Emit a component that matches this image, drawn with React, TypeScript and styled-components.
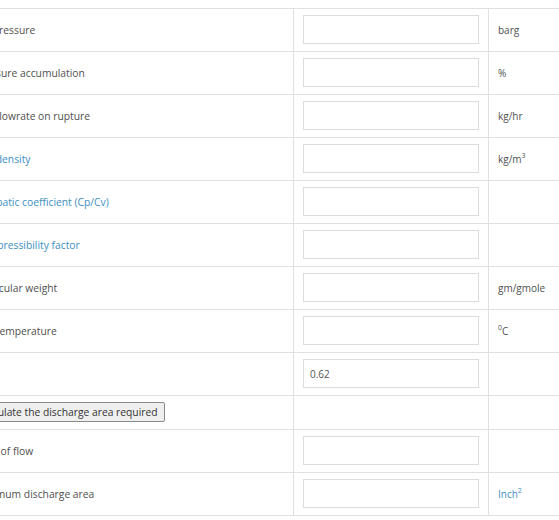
import React from "react";
import styled, { createGlobalStyle } from "styled-components";

const Global = createGlobalStyle`
  html {
    overflow: hidden;
  }
  body {
    margin: 0;
    background: #ffffff;
    font-family: "Open Sans", "Noto Sans", Arial, sans-serif;
    font-size: 10px;
    color: #505050;
  }
`;

const Page = styled.div`
  padding-top: 8px;
`;

const Table = styled.div`
  margin-left: -34px;
  width: calc(100% + 34px);
  border-top: 1px solid #e0e0e0;
`;

const Row = styled.div<{ $h?: number }>`
  display: grid;
  grid-template-columns: 328px 195px 1fr;
  height: ${(p) => p.$h ?? 43}px;
  box-sizing: border-box;
  border-bottom: 1px solid #e0e0e0;
`;

const Cell = styled.div<{ $last?: boolean }>`
  box-sizing: border-box;
  display: flex;
  align-items: center;
  padding: 0 9px;
  border-right: ${(p) => (p.$last ? "none" : "1px solid #e0e0e0")};
  white-space: nowrap;
  overflow: hidden;
`;

const Label = styled.span<{ $link?: boolean }>`
  font-size: 10.3px;
  color: ${(p) => (p.$link ? "#3d8ec2" : "#4f4f4f")};
`;

const InputCell = styled(Cell)`
  align-items: flex-start;
  padding-top: 6px;
`;

const Field = styled.input`
  box-sizing: border-box;
  width: 177px;
  height: 29px;
  margin: 0;
  padding: 0 6px;
  border: 1px solid #dcdcdc;
  border-radius: 0;
  background: #fff;
  font-family: "Open Sans", "Noto Sans", Arial, sans-serif;
  font-size: 10px;
  color: #555;
  outline: none;
`;

const Unit = styled.span<{ $link?: boolean }>`
  color: ${(p) => (p.$link ? "#3d8ec2" : "#4f4f4f")};
  sup {
    font-size: 7px;
    line-height: 0;
    position: relative;
    top: -1px;
    vertical-align: super;
  }
`;

const Button = styled.button`
  box-sizing: border-box;
  height: 20px;
  margin: -2px 0 0 -4px;
  padding: 0 6px;
  border: 1px solid #8a8a8a;
  border-radius: 2px;
  background: #efefef;
  font-family: "Open Sans", "Noto Sans", Arial, sans-serif;
  font-size: 10.3px;
  color: #333;
  white-space: nowrap;
`;

type R = {
  label: string;
  link?: boolean;
  unit?: React.ReactNode;
  unitLink?: boolean;
  value?: string;
};

const rows: R[] = [
  { label: "Set pressure", unit: "barg" },
  { label: "Pressure accumulation", unit: "%" },
  { label: "Gas flowrate on rupture", unit: "kg/hr" },
  {
    label: "Gas density",
    link: true,
    unit: (
      <>
        kg/m<sup>3</sup>
      </>
    ),
  },
  { label: "Adiabatic coefficient (Cp/Cv)", link: true },
  { label: "Compressibility factor", link: true },
  { label: "Molecular weight", unit: "gm/gmole" },
  {
    label: "Gas temperature",
    unit: (
      <>
        <sup>0</sup>C
      </>
    ),
  },
  { label: "Kd", value: "0.62" },
];

const after: R[] = [
  { label: "Type of flow" },
  {
    label: "Minimum discharge area",
    unitLink: true,
    unit: (
      <>
        Inch<sup>2</sup>
      </>
    ),
  },
];

const DataRow = ({ r }: { r: R }) => (
  <Row>
    <Cell>
      <Label $link={r.link}>{r.label}</Label>
    </Cell>
    <InputCell>
      <Field type="text" defaultValue={r.value ?? ""} />
    </InputCell>
    <Cell $last>
      <Unit $link={r.unitLink}>{r.unit}</Unit>
    </Cell>
  </Row>
);

export default function App() {
  return (
    <Page>
      <Global />
      <Table>
        {rows.map((r) => (
          <DataRow key={r.label} r={r} />
        ))}
        <Row $h={34}>
          <Cell>
            <Button type="button">Calculate the discharge area required</Button>
          </Cell>
          <Cell />
          <Cell $last />
        </Row>
        {after.map((r) => (
          <DataRow key={r.label} r={r} />
        ))}
      </Table>
    </Page>
  );
}
